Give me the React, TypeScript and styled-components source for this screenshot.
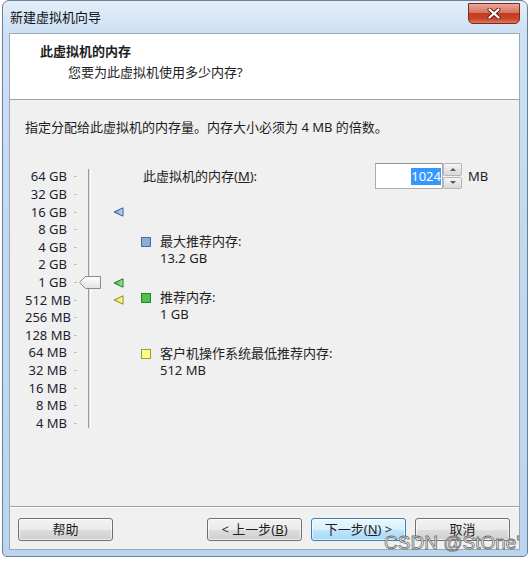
import styled, { createGlobalStyle } from 'styled-components';

const GlobalStyle = createGlobalStyle`
	html, body {
		margin: 0;
		padding: 0;
		background: #ffffff;
	}
	body {
		font-family: 'Noto Sans', 'Noto Sans CJK SC', sans-serif;
		font-size: 13px;
		color: #1e1e1e;
	}
`;

const Window = styled.div`
	box-sizing: border-box;
	position: relative;
	margin-left: 2px;
	width: 526px;
	height: 557px;
	border: 1px solid #6b7f94;
	border-radius: 7px 7px 5px 5px;
	background: linear-gradient(180deg, #e3effa 0%, #cfe2f5 5%, #c2d9f0 40%, #bcd5ee 100%);
	padding: 0 7px 6px 6px;
	display: flex;
	flex-direction: column;
`;

const TitleBar = styled.div`
	height: 32px;
	display: flex;
	align-items: flex-start;
	flex-shrink: 0;
`;

const TitleText = styled.div`
	padding: 8px 0 0 1px;
	line-height: 17px;
	color: #111;
`;

const CloseButton = styled.div`
	margin-left: auto;
	margin-top: 2px;
	width: 52px;
	height: 21px;
	box-sizing: border-box;
	border: 1px solid #7a2a1e;
	border-radius: 0 0 5px 5px;
	background: linear-gradient(180deg, #e9a898 0%, #d9735f 45%, #c4391f 50%, #c9472e 80%, #dd7a5c 100%);
	display: flex;
	align-items: center;
	justify-content: center;
`;

const Client = styled.div`
	flex: 1;
	display: flex;
	flex-direction: column;
	border: 1px solid #97a9bb;
	background: #f0f0f0;
	min-height: 0;
`;

const Header = styled.div`
	height: 66px;
	flex-shrink: 0;
	box-sizing: border-box;
	background: #ffffff;
	border-bottom: 1px solid #a0a0a0;
	padding: 7px 0 0 30px;
`;

const HeaderTitle = styled.div`
	font-weight: 700;
	line-height: 20px;
`;

const HeaderSub = styled.div`
	margin: 1px 0 0 28px;
	line-height: 20px;
`;

const Content = styled.div`
	flex: 1;
	padding: 0 15px;
`;

const Instruction = styled.div`
	margin-top: 19px;
	line-height: 17px;
`;

const MainRow = styled.div`
	margin-top: 27px;
	display: flex;
	align-items: flex-start;
`;

const SliderBox = styled.div`
	position: relative;
	flex: 0 0 116px;
	display: flex;
	align-items: flex-start;
`;

const Scale = styled.div`
	padding-top: 5.2px;
`;

const ScaleRow = styled.div`
	height: 17.6px;
	display: flex;
	align-items: center;
`;

const ScaleLabel = styled.span`
	width: 42px;
	text-align: right;
	line-height: 17px;
	color: #1c1f30;
	white-space: nowrap;
`;

const Tick = styled.span`
	margin-left: 7px;
	width: 3px;
	height: 1px;
	background: #bdbdbd;
`;

const Track = styled.div`
	margin: 6px 0 0 11px;
	width: 3px;
	height: 259px;
	box-sizing: border-box;
	border-left: 1px solid #9c9c9c;
	border-right: 1px solid #ffffff;
	background: #dadada;
`;

const Thumb = styled.svg`
	position: absolute;
	left: 54px;
`;

const Marker = styled.svg`
	position: absolute;
	left: 88px;
`;

const Info = styled.div`
	flex: 1;
	display: flex;
	flex-direction: column;
`;

const MemoryRow = styled.div`
	height: 26px;
	display: flex;
	align-items: center;
`;

const MemoryLabel = styled.span`
	flex: 0 0 232px;
	padding-left: 2px;
	line-height: 17px;
`;

const Spinner = styled.div`
	display: flex;
	height: 26px;
`;

const SpinInput = styled.div`
	width: 68px;
	box-sizing: border-box;
	border: 1px solid #abadb3;
	border-top-color: #8e9096;
	background: #ffffff;
	display: flex;
	align-items: center;
	justify-content: flex-end;
	padding-right: 1px;
`;

const Selected = styled.span`
	background: #3399ff;
	color: #ffffff;
	line-height: 17px;
`;

const SpinButtons = styled.div`
	width: 19px;
	display: flex;
	flex-direction: column;
	gap: 1px;
`;

const SpinButton = styled.div<{ $down?: boolean }>`
	flex: 1;
	box-sizing: border-box;
	border: 1px solid #b5b5b5;
	border-radius: 2px;
	background: linear-gradient(180deg, #f6f6f6 0%, #e6e6e6 50%, #d9d9d9 100%);
	display: flex;
	align-items: center;
	justify-content: center;
	&::after {
		content: '';
		border-left: 3px solid transparent;
		border-right: 3px solid transparent;
		${(p) => (p.$down ? 'border-top: 3px solid #4a5a70;' : 'border-bottom: 3px solid #4a5a70;')}
	}
`;

const Unit = styled.span`
	margin-left: 6px;
	line-height: 17px;
`;

const LegendItem = styled.div<{ $gap: number }>`
	margin-top: ${(p) => p.$gap}px;
	display: flex;
	align-items: flex-start;
`;

const Swatch = styled.span<{ $fill: string; $edge: string }>`
	flex: 0 0 10px;
	height: 10px;
	margin: 4px 9px 0 0;
	box-sizing: border-box;
	border: 1px solid ${(p) => p.$edge};
	background: ${(p) => p.$fill};
`;

const LegendText = styled.div`
	line-height: 17px;
`;

const Footer = styled.div`
	flex-shrink: 0;
	border-top: 1px solid #a0a0a0;
	box-shadow: inset 0 1px 0 #ffffff;
	padding: 11px 9px 8px 8px;
	display: flex;
	gap: 9px;
`;

const Button = styled.button<{ $primary?: boolean }>`
	width: 95px;
	height: 23px;
	padding: 0;
	font: inherit;
	color: #1e1e1e;
	border-radius: 3px;
	border: 1px solid ${(p) => (p.$primary ? '#3c7fb1' : '#707070')};
	background: ${(p) =>
		p.$primary
			? 'linear-gradient(180deg, #eaf6fd 0%, #d9f0fc 50%, #bee6fd 51%, #a7d9f5 100%)'
			: 'linear-gradient(180deg, #f2f2f2 0%, #ebebeb 50%, #dddddd 51%, #cfcfcf 100%)'};
	box-shadow: inset 0 0 0 1px rgba(255, 255, 255, 0.6);
	line-height: 19px;
`;

const Spacer = styled.div`
	flex: 1;
`;

const Watermark = styled.div`
	position: absolute;
	right: 7px;
	top: 531px;
	font-family: 'Liberation Sans', sans-serif;
	font-size: 19px;
	line-height: 22px;
	color: rgba(255, 255, 255, 0.92);
	-webkit-text-stroke: 0.8px #6f6f6f;
	pointer-events: none;
`;

const scaleLabels = [
	'64 GB', '32 GB', '16 GB', '8 GB', '4 GB', '2 GB', '1 GB',
	'512 MB', '256 MB', '128 MB', '64 MB', '32 MB', '16 MB', '8 MB', '4 MB',
];

const rowCenter = (i: number) => 14 + i * 17.6;

const markers = [
	{ index: 2, fill: '#6f93cf', light: '#c4d6f2', edge: '#3b5d94' },
	{ index: 6, fill: '#36ad36', light: '#a6e6a0', edge: '#1f7a1f' },
	{ index: 7, fill: '#dede30', light: '#fbfba8', edge: '#8e8e1e' },
];

const legend = [
	{ title: '最大推荐内存:', value: '13.2 GB', fill: '#8eaad6', edge: '#4d6c9c', gap: 44 },
	{ title: '推荐内存:', value: '1 GB', fill: '#4cc24c', edge: '#2a822a', gap: 22 },
	{ title: '客户机操作系统最低推荐内存:', value: '512 MB', fill: '#ffff88', edge: '#9a9a3a', gap: 22 },
];

export default function App() {
	return (
		<>
			<GlobalStyle />
			<Window>
				<TitleBar>
					<TitleText>新建虚拟机向导</TitleText>
					<CloseButton>
						<svg width='14' height='11' viewBox='0 0 14 11'>
							<path d='M2.5 1.5 L11.5 9.5 M11.5 1.5 L2.5 9.5' stroke='#5a1c12' strokeWidth='4' strokeLinecap='round' />
							<path d='M2.5 1.5 L11.5 9.5 M11.5 1.5 L2.5 9.5' stroke='#ffffff' strokeWidth='2.3' strokeLinecap='round' />
						</svg>
					</CloseButton>
				</TitleBar>
				<Client>
					<Header>
						<HeaderTitle>此虚拟机的内存</HeaderTitle>
						<HeaderSub>您要为此虚拟机使用多少内存?</HeaderSub>
					</Header>
					<Content>
						<Instruction>指定分配给此虚拟机的内存量。内存大小必须为 4 MB 的倍数。</Instruction>
						<MainRow>
							<SliderBox>
								<Scale>
									{scaleLabels.map((l) => (
										<ScaleRow key={l}>
											<ScaleLabel>{l}</ScaleLabel>
											<Tick />
										</ScaleRow>
									))}
								</Scale>
								<Track />
								<Thumb width='22' height='13' viewBox='0 0 22 13' style={{ top: rowCenter(6) - 6.5 }}>
									<defs>
										<linearGradient id='thumbFill' x1='0' y1='0' x2='0' y2='1'>
											<stop offset='0' stopColor='#ffffff' />
											<stop offset='1' stopColor='#e2e2e2' />
										</linearGradient>
									</defs>
									<path d='M0.5 6.5 L6.5 0.5 H21.5 V12.5 H6.5 Z' fill='url(#thumbFill)' stroke='#8a8a8a' />
								</Thumb>
								{markers.map((m) => (
									<Marker
										key={m.index}
										width='11'
										height='10'
										viewBox='0 0 11 10'
										style={{ top: rowCenter(m.index) - 5 }}
									>
										<defs>
											<linearGradient id={`mk${m.index}`} x1='0' y1='0' x2='1' y2='0'>
												<stop offset='0' stopColor={m.fill} />
												<stop offset='1' stopColor={m.light} />
											</linearGradient>
										</defs>
										<path d='M1 5 L10 0.8 L10 9.2 Z' fill={`url(#mk${m.index})`} stroke={m.edge} strokeLinejoin='round' />
									</Marker>
								))}
							</SliderBox>
							<Info>
								<MemoryRow>
									<MemoryLabel>
										此虚拟机的内存(<u>M</u>):
									</MemoryLabel>
									<Spinner>
										<SpinInput>
											<Selected>1024</Selected>
										</SpinInput>
										<SpinButtons>
											<SpinButton />
											<SpinButton $down />
										</SpinButtons>
									</Spinner>
									<Unit>MB</Unit>
								</MemoryRow>
								{legend.map((item) => (
									<LegendItem key={item.title} $gap={item.gap}>
										<Swatch $fill={item.fill} $edge={item.edge} />
										<LegendText>
											<div>{item.title}</div>
											<div>{item.value}</div>
										</LegendText>
									</LegendItem>
								))}
							</Info>
						</MainRow>
					</Content>
					<Footer>
						<Button>帮助</Button>
						<Spacer />
						<Button>
							&lt; 上一步(<u>B</u>)
						</Button>
						<Button $primary>
							下一步(<u>N</u>) &gt;
						</Button>
						<Button>取消</Button>
					</Footer>
				</Client>
				<Watermark>CSDN @StOne'</Watermark>
			</Window>
		</>
	);
}
